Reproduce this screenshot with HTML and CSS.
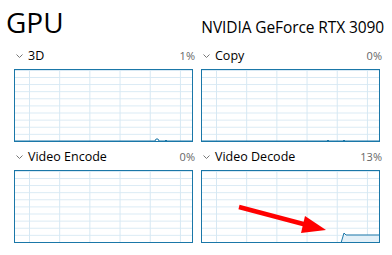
FILE: index.html
```html
<!DOCTYPE html>
<html lang="en">
<head>
  <meta charset="UTF-8">
  <title>GPU</title>
  <link rel="stylesheet" href="styles.css">
</head>
<body>
  <div class="header">
    <h1 class="title">GPU</h1>
    <div class="model">NVIDIA GeForce RTX 3090</div>
  </div>

  <div class="engines">
    <!-- 3D -->
    <div class="panel">
      <div class="label">
        <svg class="chevron" width="7" height="5" viewBox="0 0 7 5"><polyline points="0.5,0.5 3.5,3.5 6.5,0.5" /></svg>
        <span class="name">3D</span>
        <span class="pct">1%</span>
      </div>
      <div class="chart">
        <svg class="trace" viewBox="0 0 177 71" preserveAspectRatio="none">
          <polyline points="0,71 140,71 141,69 143,69 144,71 150,71 151,70 152,71 177,71" />
        </svg>
      </div>
    </div>

    <!-- Copy -->
    <div class="panel">
      <div class="label">
        <svg class="chevron" width="7" height="5" viewBox="0 0 7 5"><polyline points="0.5,0.5 3.5,3.5 6.5,0.5" /></svg>
        <span class="name">Copy</span>
        <span class="pct">0%</span>
      </div>
      <div class="chart">
        <svg class="trace" viewBox="0 0 177 71" preserveAspectRatio="none">
          <polyline points="0,71 125,71 126,70 127,71 141,71 142,70 143,71 177,71" />
        </svg>
      </div>
    </div>

    <!-- Video Encode -->
    <div class="panel">
      <div class="label">
        <svg class="chevron" width="7" height="5" viewBox="0 0 7 5"><polyline points="0.5,0.5 3.5,3.5 6.5,0.5" /></svg>
        <span class="name">Video Encode</span>
        <span class="pct">0%</span>
      </div>
      <div class="chart"></div>
    </div>

    <!-- Video Decode -->
    <div class="panel">
      <div class="label">
        <svg class="chevron" width="7" height="5" viewBox="0 0 7 5"><polyline points="0.5,0.5 3.5,3.5 6.5,0.5" /></svg>
        <span class="name">Video Decode</span>
        <span class="pct">13%</span>
      </div>
      <div class="chart">
        <svg class="trace" viewBox="0 0 177 71" preserveAspectRatio="none">
          <polygon class="fill" points="139,72 142,62 144,64 177,64 177,72" />
          <polyline points="139,72 142,62 144,64 177,64" />
        </svg>
        <!-- red arrow pointing at the decode load -->
        <svg class="arrow" width="130" height="70" viewBox="0 0 130 70">
          <line x1="38" y1="37" x2="106" y2="55" />
          <polygon points="125,60 104,46 100,63" />
        </svg>
      </div>
    </div>
  </div>
</body>
</html>
```

FILE: styles.css
```css
body {
  margin: 0;
  background: #fff;
  color: #000;
  font-family: "Segoe UI", "Open Sans", sans-serif;
}

.header {
  display: flex;
  justify-content: space-between;
  align-items: baseline;
  padding: 5px 8px 0 6px;
}

.title {
  margin: 0;
  font-size: 28px;
  font-weight: normal;
  line-height: 34px;
}

.model {
  font-size: 15.5px;
  line-height: 20px;
  letter-spacing: -0.1px;
}

.engines {
  display: grid;
  grid-template-columns: 179px 179px;
  column-gap: 8px;
  row-gap: 7px;
  padding-left: 14px;
  margin-top: 9px;
}

.label {
  display: flex;
  align-items: baseline;
  height: 16px;
  line-height: 16px;
  margin-bottom: 5px;
  margin-right: -2px;
}

.chevron {
  width: 7px;
  height: 5px;
  margin: 0 5px 0 2px;
  fill: none;
  stroke: #777;
  stroke-width: 1;
  align-self: center;
}

.name {
  font-size: 12.5px;
  flex: 1;
}

.pct {
  font-size: 11px;
  color: #666;
}

.chart {
  position: relative;
  box-sizing: border-box;
  height: 73px;
  border: 1px solid #1a77a8;
  background-color: #fff;
  background-image:
    linear-gradient(to right, #d6e8f3 1px, transparent 1px),
    linear-gradient(to bottom, #d6e8f3 1px, transparent 1px);
  background-size: 30.2px 100%, 100% 10%;
  background-position: 14px 0, 0 0;
}

.trace {
  display: block;
  width: 100%;
  height: 100%;
}

.trace polyline {
  fill: none;
  stroke: #1a77a8;
  stroke-width: 1;
}

.trace .fill {
  fill: #e3f0f8;
}

.arrow {
  position: absolute;
  left: -1px;
  top: -1px;
}

.arrow line {
  stroke: #f00;
  stroke-width: 4.5;
}

.arrow polygon {
  fill: #f00;
}
```
